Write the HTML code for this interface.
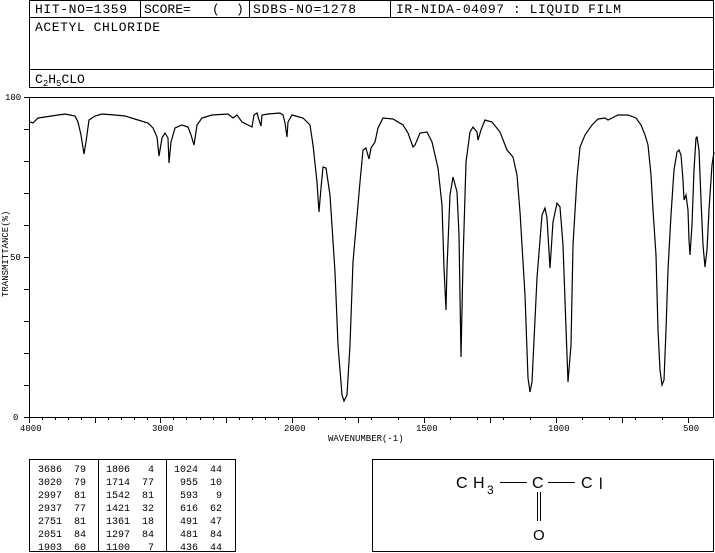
<!DOCTYPE html>
<html><head><meta charset="utf-8"><style>
html,body{margin:0;padding:0;background:#fff;}
svg{display:block;}
text{font-family:"Liberation Mono",monospace;fill:#000;}
.h{font-size:13px;}
.s{font-size:9px;}
.t{font-size:10px;}
.f{font-family:"Liberation Sans",sans-serif;font-size:16px;}
</style></head><body>
<svg width="715" height="553" viewBox="0 0 715 553" xmlns="http://www.w3.org/2000/svg">
<g fill="none" stroke="#000" stroke-width="1">
<rect x="29.5" y="0.5" width="684" height="87"/>
<line x1="29" y1="17.5" x2="714" y2="17.5"/>
<line x1="29" y1="69.5" x2="714" y2="69.5"/>
<line x1="140.5" y1="0" x2="140.5" y2="17"/>
<line x1="249.5" y1="0" x2="249.5" y2="17"/>
<line x1="390.5" y1="0" x2="390.5" y2="17"/>
</g>
<text class="h" x="35" y="13" textLength="92">HIT-NO=1359</text>
<text class="h" x="144" y="13">SCORE=</text>
<text class="h" x="212" y="13">(</text>
<text class="h" x="236" y="13">)</text>
<text class="h" x="253" y="13" textLength="103">SDBS-NO=1278</text>
<text class="h" x="396" y="13" textLength="225">IR-NIDA-04097 : LIQUID FILM</text>
<text class="h" x="35" y="31" textLength="125">ACETYL CHLORIDE</text>
<text class="h" x="35" y="83">C<tspan font-size="9" dy="3">2</tspan><tspan dy="-3">H</tspan><tspan font-size="9" dy="3">5</tspan><tspan dy="-3">CLO</tspan></text>

<g fill="none" stroke="#000" stroke-width="1">
<rect x="29.5" y="97.5" width="684" height="320"/>
<path d="M24 97.5H29M24 129.5H29M24 161.5H29M24 193.5H29M24 225.5H29M24 257.5H29M24 289.5H29M24 321.5H29M24 353.5H29M24 385.5H29M24 417.5H29"/>
<path d="M29.5 417V423M95.5 417V423M160.5 417V423M226.5 417V423M292.5 417V423M358.5 417V423M424.5 417V423M490.5 417V423M556.5 417V423M622.5 417V423M688.5 417V423"/>
<path d="M42.5 417V420M55.5 417V420M68.5 417V420M81.5 417V420M108.5 417V420M121.5 417V420M134.5 417V420M147.5 417V420M173.5 417V420M186.5 417V420M200.5 417V420M213.5 417V420M239.5 417V420M252.5 417V420M265.5 417V420M278.5 417V420M318.5 417V420M345.5 417V420M371.5 417V420M398.5 417V420M450.5 417V420M477.5 417V420M503.5 417V420M530.5 417V420M582.5 417V420M609.5 417V420M635.5 417V420M662.5 417V420"/>
</g>
<text class="s" x="5" y="100">100</text>
<text class="s" x="10" y="260">50</text>
<text class="s" x="13" y="420">0</text>
<text class="s" x="20" y="431">4000</text>
<text class="s" x="152" y="431">3000</text>
<text class="s" x="284" y="431">2000</text>
<text class="s" x="416" y="431">1500</text>
<text class="s" x="548" y="431">1000</text>
<text class="s" x="683" y="431">500</text>
<text class="s" x="328" y="441" font-size="8">WAVENUMBER(-1)</text>
<text class="s" x="0" y="0" font-size="8" transform="translate(8,297) rotate(-90)">TRANSMITTANCE(%)</text>

<polyline fill="none" stroke="#000" stroke-width="1.2" points="30,122 33,123 38,118 45,117 58,115 65,114 75,116 78,122 81,135 84,154 86,142 89,120 95,116 102,114 115,115 125,116 138,120 148,123 153,128 157,137 159,156 162,138 165,133 168,138 169,163 171,142 175,128 182,125 188,127 191,135 194,145 197,125 202,118 212,115 228,114 233,118 237,115 242,122 248,125 252,127 254,115 257,113 259,120 261,126 262,115 268,114 280,113 283,115 285,123 287,137 288,122 292,115 303,118 310,125 313,145 317,182 319,212 321,188 323,167 326,168 330,195 335,272 338,345 342,395 344,401 347,395 350,345 353,262 360,182 363,150 366,148 367,152 369,159 371,148 375,142 378,128 383,118 393,119 403,125 408,133 413,147 415,145 420,133 427,132 432,142 435,155 438,168 442,205 444,268 446,310 447,268 450,195 453,177 457,192 459,235 461,357 463,262 466,162 470,132 473,127 477,132 478,140 481,130 485,120 492,122 500,132 507,150 513,157 517,175 520,212 525,295 528,378 530,392 532,382 537,278 542,215 545,208 547,218 550,268 553,222 557,203 560,207 563,245 566,328 568,382 571,345 573,245 577,178 580,147 585,135 592,125 598,119 605,118 608,120 612,118 618,115 628,115 636,118 641,125 645,135 648,145 651,175 653,210 656,255 658,330 660,370 662,385 664,380 666,330 668,270 671,215 674,170 677,152 679,150 681,155 683,180 684,200 686,195 688,210 689,240 690,255 692,225 694,170 696,138 697,137 699,150 701,200 703,245 705,267 707,250 709,210 712,165 714,152"/>

<g fill="none" stroke="#000" stroke-width="1">
<rect x="29.5" y="459.5" width="206" height="92"/>
<line x1="98.5" y1="459" x2="98.5" y2="552"/>
<line x1="166.5" y1="459" x2="166.5" y2="552"/>
</g>
<g>
<text class="t" x="38" y="472" xml:space="preserve">3686  79</text>
<text class="t" x="38" y="485" xml:space="preserve">3020  79</text>
<text class="t" x="38" y="498" xml:space="preserve">2997  81</text>
<text class="t" x="38" y="511" xml:space="preserve">2937  77</text>
<text class="t" x="38" y="524" xml:space="preserve">2751  81</text>
<text class="t" x="38" y="537" xml:space="preserve">2051  84</text>
<text class="t" x="38" y="550" xml:space="preserve">1903  60</text>
<text class="t" x="106" y="472" xml:space="preserve">1806   4</text>
<text class="t" x="106" y="485" xml:space="preserve">1714  77</text>
<text class="t" x="106" y="498" xml:space="preserve">1542  81</text>
<text class="t" x="106" y="511" xml:space="preserve">1421  32</text>
<text class="t" x="106" y="524" xml:space="preserve">1361  18</text>
<text class="t" x="106" y="537" xml:space="preserve">1297  84</text>
<text class="t" x="106" y="550" xml:space="preserve">1100   7</text>
<text class="t" x="174" y="472" xml:space="preserve">1024  44</text>
<text class="t" x="174" y="485" xml:space="preserve"> 955  10</text>
<text class="t" x="174" y="498" xml:space="preserve"> 593   9</text>
<text class="t" x="174" y="511" xml:space="preserve"> 616  62</text>
<text class="t" x="174" y="524" xml:space="preserve"> 491  47</text>
<text class="t" x="174" y="537" xml:space="preserve"> 481  84</text>
<text class="t" x="174" y="550" xml:space="preserve"> 436  44</text>
</g>

<g fill="none" stroke="#000" stroke-width="1">
<rect x="372.5" y="459.5" width="341" height="92"/>
<line x1="500" y1="482.5" x2="527" y2="482.5"/>
<line x1="548" y1="482.5" x2="575" y2="482.5"/>
<line x1="537.5" y1="492" x2="537.5" y2="521"/>
<line x1="540.5" y1="492" x2="540.5" y2="521"/>
</g>
<text class="f" x="456" y="488">C</text>
<text class="f" x="473" y="488">H</text>
<text x="487" y="494" style="font-family:'Liberation Sans',sans-serif;font-size:12px">3</text>
<text class="f" x="532" y="488">C</text>
<text class="f" x="581" y="488">C</text>
<text class="f" x="599" y="489">l</text>
<text x="533" y="540" style="font-family:'Liberation Sans',sans-serif;font-size:15px">O</text>
</svg>
</body></html>
